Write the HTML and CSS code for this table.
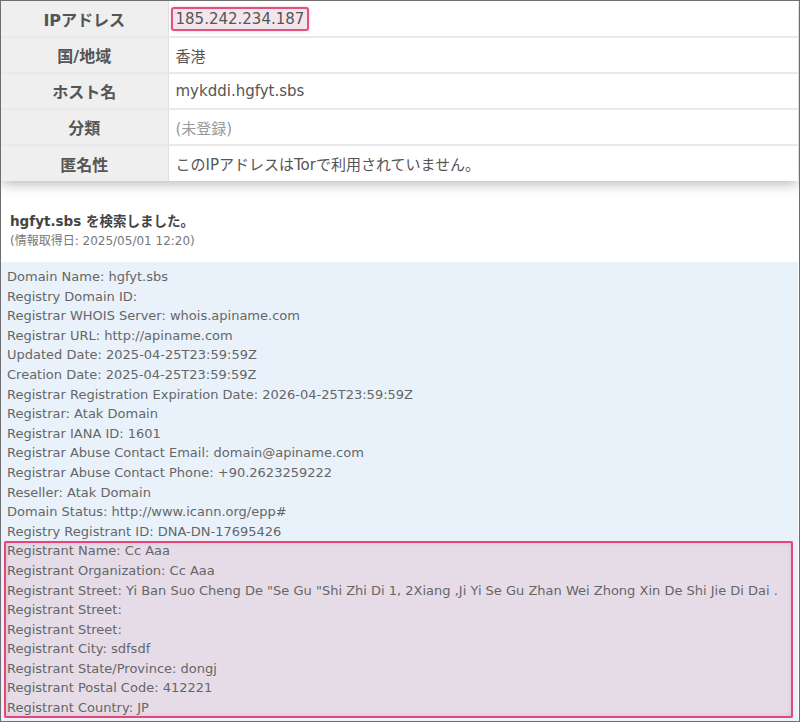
FILE: index.html
```html
<!DOCTYPE html>
<html lang="ja">
<head>
<meta charset="utf-8">
<link rel="stylesheet" href="styles.css">
</head>
<body>
<div class="frame">
  <table class="info">
    <tr><th>IPアドレス</th><td><span class="ip">185.242.234.187</span></td></tr>
    <tr><th>国/地域</th><td>香港</td></tr>
    <tr><th>ホスト名</th><td>mykddi.hgfyt.sbs</td></tr>
    <tr><th>分類</th><td class="muted">(未登録)</td></tr>
    <tr class="last"><th>匿名性</th><td>このIPアドレスはTorで利用されていません。</td></tr>
  </table>
  <div class="search">
    <div class="title">hgfyt.sbs を検索しました。</div>
    <div class="sub">(情報取得日: 2025/05/01 12:20)</div>
  </div>
  <div class="whois">
    <div class="ln">Domain Name: hgfyt.sbs</div>
    <div class="ln">Registry Domain ID:</div>
    <div class="ln">Registrar WHOIS Server: whois.apiname.com</div>
    <div class="ln">Registrar URL: http://apiname.com</div>
    <div class="ln">Updated Date: 2025-04-25T23:59:59Z</div>
    <div class="ln">Creation Date: 2025-04-25T23:59:59Z</div>
    <div class="ln">Registrar Registration Expiration Date: 2026-04-25T23:59:59Z</div>
    <div class="ln">Registrar: Atak Domain</div>
    <div class="ln">Registrar IANA ID: 1601</div>
    <div class="ln">Registrar Abuse Contact Email: domain@apiname.com</div>
    <div class="ln">Registrar Abuse Contact Phone: +90.2623259222</div>
    <div class="ln">Reseller: Atak Domain</div>
    <div class="ln">Domain Status: http://www.icann.org/epp#</div>
    <div class="ln">Registry Registrant ID: DNA-DN-17695426</div>
    <div class="mark">
      <div class="ln">Registrant Name: Cc Aaa</div>
      <div class="ln">Registrant Organization: Cc Aaa</div>
      <div class="ln">Registrant Street: Yi Ban Suo Cheng De "Se Gu "Shi Zhi Di 1, 2Xiang ,Ji Yi Se Gu Zhan Wei Zhong Xin De Shi Jie Di Dai .</div>
      <div class="ln">Registrant Street:</div>
      <div class="ln">Registrant Street:</div>
      <div class="ln">Registrant City: sdfsdf</div>
      <div class="ln">Registrant State/Province: dongj</div>
      <div class="ln">Registrant Postal Code: 412221</div>
      <div class="ln">Registrant Country: JP</div>
    </div>
  </div>
</div>
</body>
</html>
```

FILE: styles.css
```css
* { box-sizing: border-box; }
html, body { margin: 0; padding: 0; background: #fff; }
.frame {
  width: 800px;
  height: 722px;
  border: 1px solid #6e6e6e;
  overflow: hidden;
  background: #fff;
  font-family: "DejaVu Sans", "Noto Sans CJK JP", sans-serif;
  color: #555;
}
.info {
  width: 797px;
  border-collapse: collapse;
  box-shadow: 0 3px 12px rgba(0,0,0,0.28);
  position: relative;
}
.info th, .info td {
  height: 36px;
  padding: 0;
  border-bottom: 2px solid #e9e9e9;
  vertical-align: middle;
}
.info tr.last th, .info tr.last td { border-bottom: none; }
.info th {
  width: 167px;
  background: #efefef;
  border-right: 1px solid #e0e0e0;
  font-weight: bold;
  font-size: 16px;
  color: #555;
  text-align: center;
}
.info td {
  background: #fff;
  font-size: 15px;
  padding-left: 7px;
  color: #555;
}
.info td.muted { color: #999; }
.ip {
  display: inline-block;
  margin-left: -5px;
  padding: 1px 3px 1px 3px;
  border: 2px solid #e2507d;
  border-radius: 3px;
  background: #f3e5ec;
  box-shadow: 0 0 3px rgba(226,80,125,0.35);
  line-height: 18px;
}
.search {
  padding: 30px 10px 12px 9px;
}
.title {
  font-size: 13.5px;
  font-weight: bold;
  line-height: 20px;
  color: #444;
}
.sub {
  margin-top: 1px;
  font-size: 12px;
  line-height: 18px;
  color: #777;
}
.whois {
  background: #e9f2fb;
  padding: 5px 5px 0 3px;
  width: 797px;
  font-size: 13px;
  color: #666;
  height: 460px;
}
.ln {
  line-height: 19.6px;
  padding-left: 3px;
  white-space: nowrap;
}
.mark {
  background: #e5dce8;
  outline: 2px solid #e8457a;
  outline-offset: -2px;
  box-shadow: inset 0 0 6px rgba(0,0,0,0.18);
  overflow: hidden;
  border-radius: 2px;
}
```
